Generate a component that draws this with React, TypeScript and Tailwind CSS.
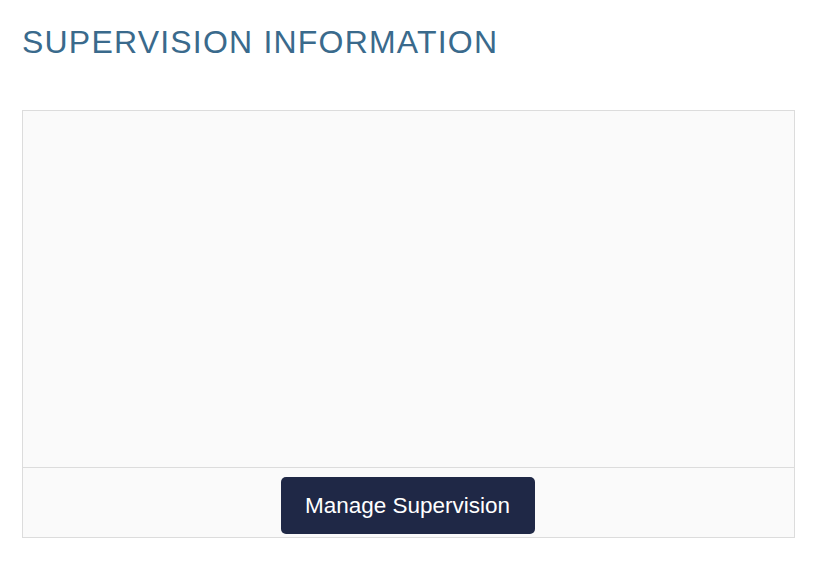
export default function App() {
  return (
    <div className="min-h-screen bg-white px-[22px] pt-[22px] font-['Liberation_Sans',Arial,sans-serif]">
      <h2 className="text-[32px] leading-[40px] tracking-[1.2px] text-[#3a6a8c] uppercase">
        Supervision Information
      </h2>

      <div className="mt-[48px] w-[773px] border border-[#dcdcdc] bg-[#fafafa]">
        {/* Empty content area */}
        <div className="h-[356px]" />

        {/* Footer with action */}
        <div className="flex justify-center border-t border-[#dcdcdc] pt-[9px] pb-[3px] pr-[2px]">
          <button className="h-[57px] w-[254px] rounded-[5px] bg-[#1f2846] text-[22.5px] text-white">
            Manage Supervision
          </button>
        </div>
      </div>
    </div>
  );
}
